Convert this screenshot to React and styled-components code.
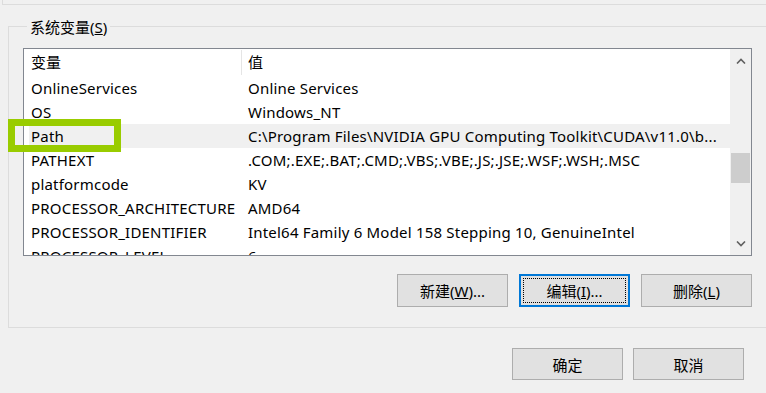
import styled, { createGlobalStyle } from "styled-components";

const GlobalStyle = createGlobalStyle`
  html, body {
    margin: 0;
    padding: 0;
    background: #f0f0f0;
    overflow: hidden;
  }
  body {
    font-family: "Noto Sans", "Noto Sans CJK SC", sans-serif;
    font-size: 15px;
    color: #000;
  }
`;

const Page = styled.div`
  position: relative;
  width: 766px;
  height: 393px;
  overflow: hidden;
`;

const PrevFrame = styled.div`
  height: 4px;
  margin-left: 2px;
  width: 800px;
  border-left: 1px solid #dcdcdc;
  border-bottom: 1px solid #dcdcdc;
`;

const GroupBox = styled.div`
  margin: 21px 0 0 8px;
  width: 790px;
  border: 1px solid #dcdcdc;
  padding: 0 0 20px 14px;
`;

const Legend = styled.div`
  width: fit-content;
  margin: -10px 0 0 4px;
  padding: 0 3px;
  line-height: 20px;
  background: #f0f0f0;
`;

const ListBox = styled.div`
  margin-top: 11px;
  width: 727px;
  height: 206px;
  border: 1px solid #828790;
  background: #fff;
  display: flex;
  overflow: hidden;
`;

const ListMain = styled.div`
  flex: 1;
  overflow: hidden;
`;

const HeaderRow = styled.div`
  display: grid;
  grid-template-columns: 217px 1px 1fr;
  height: 27px;
  align-items: center;
`;

const HeaderCell = styled.div`
  padding-left: ${(p) => p.$pad}px;
  line-height: 27px;
  white-space: nowrap;
`;

const HeaderSep = styled.div`
  align-self: stretch;
  margin: 1px 0;
  background: #e5e5e5;
`;

const Row = styled.div`
  display: grid;
  grid-template-columns: 212px 1fr;
  height: 24px;
  margin-left: 5px;
  line-height: 24px;
  letter-spacing: 0.2px;
  background: ${(p) => (p.$selected ? "#f0f0f0" : "transparent")};
`;

const Cell = styled.div`
  padding-left: ${(p) => p.$pad}px;
  white-space: nowrap;
  overflow: hidden;
`;

const ScrollBar = styled.div`
  width: 21px;
  background: #f0f0f0;
  display: flex;
  flex-direction: column;
  align-items: center;
`;

const ArrowBtn = styled.div`
  height: 23px;
  width: 100%;
  display: flex;
  align-items: center;
  justify-content: center;
`;

const Track = styled.div`
  flex: 1;
  width: 100%;
  padding-top: ${(p) => p.$offset}px;
  box-sizing: border-box;
`;

const Thumb = styled.div`
  height: 30px;
  margin: 0 1px;
  background: #cdcdcd;
`;

const ButtonRow = styled.div`
  display: flex;
  justify-content: flex-end;
  gap: ${(p) => p.$gap}px;
  width: ${(p) => p.$width}px;
  margin-top: ${(p) => p.$top}px;
`;

const Button = styled.button`
  position: relative;
  width: 111px;
  height: ${(p) => p.$h}px;
  box-sizing: border-box;
  background: #e1e1e1;
  border: 1px solid ${(p) => (p.$focused ? "#0078d7" : "#adadad")};
  box-shadow: ${(p) => (p.$focused ? "inset 0 0 0 1px #0078d7" : "none")};
  font-family: inherit;
  font-size: 15px;
  color: #000;
  padding: 0;
  cursor: default;

  ${(p) =>
    p.$focused &&
    `
    &::after {
      content: "";
      position: absolute;
      inset: 3px;
      border: 1px dotted #000;
    }
  `}
`;

const Footer = styled.div`
  display: flex;
  justify-content: flex-end;
  gap: 10px;
  padding: 20px 22px 0 0;
`;

const Highlight = styled.div`
  position: absolute;
  left: 8px;
  top: 119px;
  width: 113px;
  height: 33px;
  box-sizing: border-box;
  border: 7px solid #99cc00;
  pointer-events: none;
`;

const Chevron = ({ up }) => (
  <svg width="10" height="6" viewBox="0 0 10 6">
    <path
      d={up ? "M1 5.5 L5 1.5 L9 5.5" : "M1 0.5 L5 4.5 L9 0.5"}
      fill="none"
      stroke="#606060"
      strokeWidth="1.6"
    />
  </svg>
);

const rows = [
  ["OnlineServices", "Online Services"],
  ["OS", "Windows_NT"],
  ["Path", "C:\\Program Files\\NVIDIA GPU Computing Toolkit\\CUDA\\v11.0\\b..."],
  ["PATHEXT", ".COM;.EXE;.BAT;.CMD;.VBS;.VBE;.JS;.JSE;.WSF;.WSH;.MSC"],
  ["platformcode", "KV"],
  ["PROCESSOR_ARCHITECTURE", "AMD64"],
  ["PROCESSOR_IDENTIFIER", "Intel64 Family 6 Model 158 Stepping 10, GenuineIntel"],
  ["PROCESSOR_LEVEL", "6"],
];

export default function App() {
  return (
    <Page>
      <GlobalStyle />
      <PrevFrame />
      <GroupBox>
        <Legend>
          系统变量(<u>S</u>)
        </Legend>
        <ListBox>
          <ListMain>
            <HeaderRow>
              <HeaderCell $pad={7}>变量</HeaderCell>
              <HeaderSep />
              <HeaderCell $pad={6}>值</HeaderCell>
            </HeaderRow>
            {rows.map(([name, value]) => (
              <Row key={name} $selected={name === "Path"}>
                <Cell $pad={2}>{name}</Cell>
                <Cell $pad={7}>{value}</Cell>
              </Row>
            ))}
          </ListMain>
          <ScrollBar>
            <ArrowBtn>
              <Chevron up />
            </ArrowBtn>
            <Track $offset={81}>
              <Thumb />
            </Track>
            <ArrowBtn>
              <Chevron />
            </ArrowBtn>
          </ScrollBar>
        </ListBox>
        <ButtonRow $gap={11} $width={729} $top={18}>
          <Button $h={33}>
            新建(<u>W</u>)...
          </Button>
          <Button $h={33} $focused>
            编辑(<u>I</u>)...
          </Button>
          <Button $h={33}>
            删除(<u>L</u>)
          </Button>
        </ButtonRow>
      </GroupBox>
      <Footer>
        <Button $h={32}>确定</Button>
        <Button $h={32}>取消</Button>
      </Footer>
      <Highlight />
    </Page>
  );
}
